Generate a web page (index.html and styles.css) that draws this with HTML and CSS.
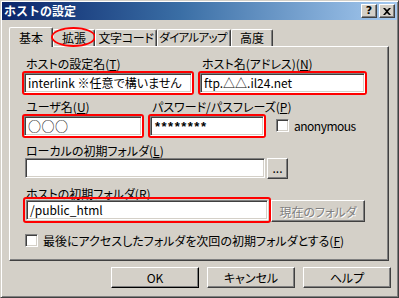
FILE: index.html
```html
<!DOCTYPE html>
<html>
<head>
<meta charset="utf-8">
<link rel="stylesheet" href="styles.css">
</head>
<body>
<div class="window">
  <div class="titlebar">
    <span class="title">ホストの設定</span>
    <div class="tbtns">
      <div class="tbtn help">?</div>
      <div class="tbtn close"><svg width="8" height="7" viewBox="0 0 8 7"><path d="M0 0h2l2 2l2-2h2l-3 3.5l3 3.5h-2l-2-2l-2 2h-2l3-3.5z" fill="#000"/></svg></div>
    </div>
  </div>

  <div class="tabs">
    <div class="tab sel t1">基本</div>
    <div class="tab t2">拡張<span class="ring"></span></div>
    <div class="tab t3">文字コード</div>
    <div class="tab t4">ダイアルアップ</div>
    <div class="tab t5">高度</div>
  </div>

  <div class="panel">
    <div class="row r1">
      <div class="grp g-name">
        <div class="lbl">ホストの設定名(<u>T</u>)</div>
        <div class="mark"><div class="edit">interlink ※任意で構いません</div></div>
      </div>
      <div class="grp g-host">
        <div class="lbl">ホスト名(アドレス)(<u>N</u>)</div>
        <div class="mark"><div class="edit">ftp.△△.il24.net</div></div>
      </div>
    </div>

    <div class="row r2">
      <div class="grp g-user">
        <div class="lbl">ユーザ名(<u>U</u>)</div>
        <div class="mark"><div class="edit circles">○○○</div></div>
      </div>
      <div class="grp g-pw">
        <div class="lbl">パスワード/パスフレーズ(<u>P</u>)</div>
        <div class="mark"><div class="edit pw">********</div></div>
      </div>
      <div class="chk anon"><span class="box"></span><span class="anon-t">anonymous</span></div>
    </div>

    <div class="r3">
      <div class="lbl">ローカルの初期フォルダ(<u>L</u>)</div>
      <div class="line">
        <div class="edit local"></div>
        <div class="btn dots">...</div>
      </div>
    </div>

    <div class="r4">
      <div class="lbl">ホストの初期フォルダ(<u>R</u>)</div>
      <div class="line">
        <div class="mark wide"><div class="edit">/public_html</div></div>
        <div class="btn cur">現在のフォルダ</div>
      </div>
    </div>

    <div class="chk last"><span class="box"></span><span>最後にアクセスしたフォルダを次回の初期フォルダとする(<u>F</u>)</span></div>
  </div>

  <div class="buttons">
    <div class="btn dlg def">OK</div>
    <div class="btn dlg">キャンセル</div>
    <div class="btn dlg">ヘルプ</div>
  </div>
</div>
</body>
</html>
```

FILE: styles.css
```css
* { box-sizing: border-box; }
html, body { margin: 0; padding: 0; background: #d4d0c8; }
body {
  font-family: "Noto Sans CJK JP", "Noto Sans", sans-serif;
  font-size: 12px;
  font-feature-settings: "palt";
  color: #000;
}
u { text-decoration: underline; text-underline-offset: 1px; }

.window {
  width: 399px;
  height: 298px;
  background: #d4d0c8;
  border: 1px solid;
  border-color: #d4d0c8 #404040 #404040 #d4d0c8;
  box-shadow: inset 1px 1px #fff, inset -1px -1px #808080;
  padding: 1px;
  display: flex;
  flex-direction: column;
}

.titlebar {
  height: 18px;
  background: linear-gradient(to right, #0a246a 0%, #3a6ea5 45%, #a6caf0 100%);
  display: flex;
  align-items: center;
  justify-content: space-between;
  padding-left: 2px;
  padding-right: 2px;
}
.title {
  color: #fff;
  font-weight: bold;
  font-size: 12px;
  line-height: 18px;
  font-feature-settings: normal;
}
.tbtns { display: flex; gap: 2px; }
.tbtn {
  width: 16px;
  height: 14px;
  background: #d4d0c8;
  border: 1px solid;
  border-color: #fff #404040 #404040 #fff;
  box-shadow: inset -1px -1px #808080;
  display: flex;
  align-items: center;
  justify-content: center;
  font-family: "DejaVu Sans", sans-serif;
  font-weight: bold;
  font-size: 11px;
  line-height: 12px;
}

.tabs {
  margin-top: 7px;
  margin-left: 7px;
  height: 19px;
  display: flex;
  align-items: flex-end;
  position: relative;
  z-index: 1;
}
.tab {
  flex: none;
  height: 17px;
  background: #d4d0c8;
  border-top: 1px solid #fff;
  border-left: 1px solid #fff;
  border-right: 1px solid #404040;
  box-shadow: inset -1px 0 #808080;
  border-radius: 2px 2px 0 0;
  text-align: center;
  line-height: 15px;
  position: relative;
  white-space: nowrap;
}
.tab.sel {
  height: 20px;
  margin-bottom: -1px;
  line-height: 17px;
  padding-top: 1px;
}
.t1 { width: 44px; }
.t2 { width: 42px; }
.t3 { width: 62px; letter-spacing: -0.3px; }
.t4 { width: 74px; font-size: 11.5px; letter-spacing: -0.7px; padding-right: 2px; }
.t5 { width: 42px; }
.ring {
  position: absolute;
  left: -3px;
  top: -3px;
  width: 45px;
  height: 20px;
  border: 2px solid #f00;
  border-radius: 50%;
}

.panel {
  margin-left: 7px;
  width: 380px;
  height: 215px;
  border-top: 1px solid #fff;
  border-left: 1px solid #fff;
  border-right: 1px solid #404040;
  border-bottom: 1px solid #404040;
  box-shadow: inset -1px -1px #808080;
  padding: 10px 0 0 12px;
  display: flex;
  flex-direction: column;
}

.lbl {
  height: 13px;
  line-height: 13px;
  margin-left: 4px;
  margin-bottom: 1px;
  white-space: nowrap;
}

.row { display: flex; gap: 4px; align-items: flex-end; }
.r2 { margin-top: 5px; }
.grp { flex: none; min-width: 0; }
.g-name { width: 172px; }
.g-host { width: 169px; }
.g-user { width: 122px; }
.g-pw { width: 118px; }

.mark {
  border: 2px solid #f00;
  border-radius: 3px;
}
.mark.wide { flex: none; width: 248px; padding: 1px; margin-left: 1px; }

.edit {
  height: 20px;
  background: #fff;
  border: 1px solid;
  border-color: #808080 #fff #fff #808080;
  box-shadow: inset 1px 1px #404040, inset -1px -1px #d4d0c8;
  padding-left: 3px;
  line-height: 17px;
  white-space: nowrap;
  overflow: hidden;
}
.edit.circles {
  font-feature-settings: normal;
  font-size: 13px;
  letter-spacing: 0.5px;
  line-height: 17px;
}
.edit.pw {
  font-family: "Liberation Sans", sans-serif;
  font-size: 13px;
  font-weight: bold;
  letter-spacing: 1.5px;
  line-height: 20px;
  padding-left: 4px;
}

.chk { display: flex; align-items: center; gap: 5px; white-space: nowrap; flex: none; }
.box {
  width: 13px;
  height: 13px;
  background: #fff;
  border: 1px solid;
  border-color: #808080 #fff #fff #808080;
  box-shadow: inset 1px 1px #404040, inset -1px -1px #d4d0c8;
  flex: none;
}
.anon { margin-left: 6px; margin-bottom: 4px; }
.anon-t { letter-spacing: -0.5px; }

.r3 { margin-top: 6px; }
.line { display: flex; align-items: flex-start; gap: 2px; }
.edit.local { flex: none; width: 240px; margin-left: 3px; }

.btn {
  flex: none;
  background: #d4d0c8;
  border: 1px solid;
  border-color: #fff #404040 #404040 #fff;
  box-shadow: inset -1px -1px #808080;
  display: flex;
  align-items: center;
  justify-content: center;
  white-space: nowrap;
}
.dots { width: 21px; height: 21px; line-height: 10px; padding-bottom: 2px; }

.r4 { margin-top: 8px; }
.r4 .lbl { margin-bottom: -3px; }
.cur {
  width: 94px;
  height: 22px;
  margin-top: 3px;
  margin-left: -2px;
  color: #808080;
  text-shadow: 1px 1px #fff;
}

.last { margin-top: 9px; margin-left: 3px; }

.buttons {
  margin-top: 6px;
  padding-right: 6px;
  display: flex;
  justify-content: flex-end;
  gap: 8px;
}
.dlg { width: 88px; height: 21px; }
.def { border-color: #fff #000 #000 #fff; }
```
